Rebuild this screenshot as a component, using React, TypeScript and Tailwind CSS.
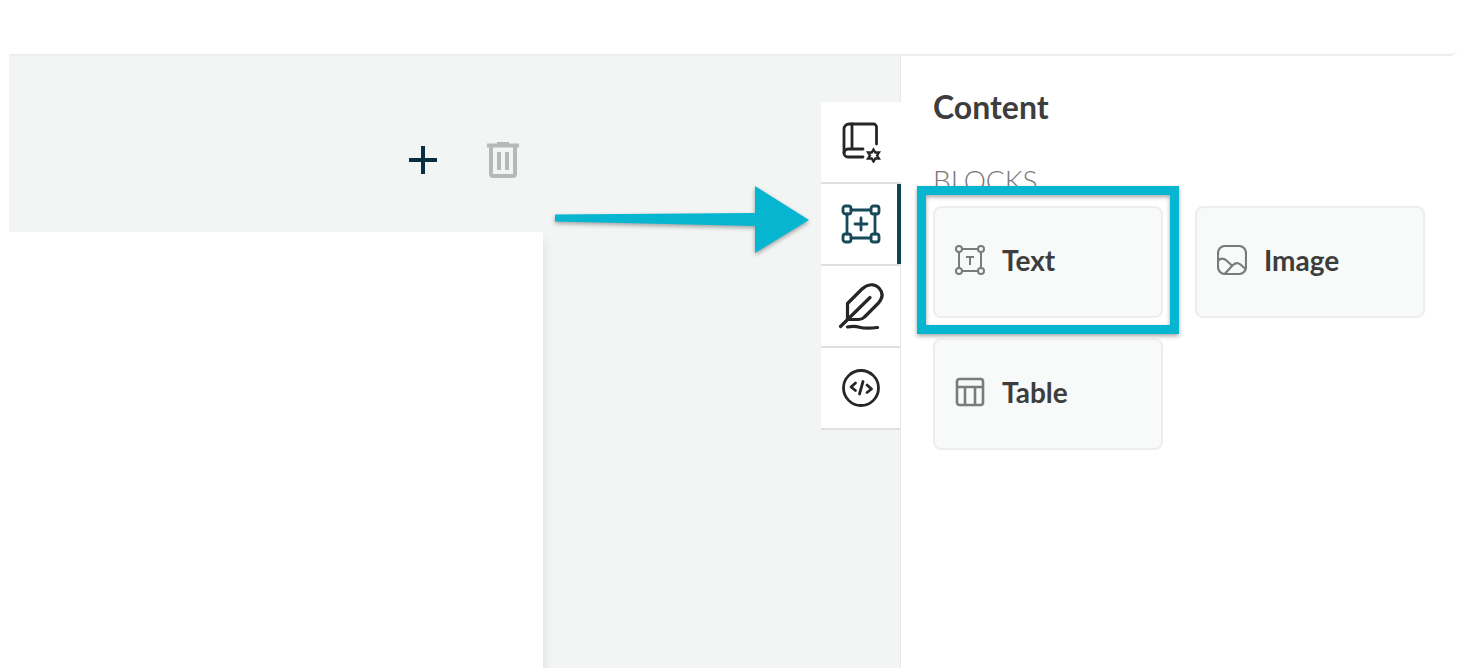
import { useState } from "react";
import type { ReactNode } from "react";

type Tab = "settings" | "content" | "design" | "code";
type Block = "text" | "image" | "table";

function SettingsIcon() {
  return (
    <svg width="40" height="42" viewBox="0 0 40 42" fill="none" stroke="#262626" strokeWidth="2.800" strokeLinecap="round" strokeLinejoin="round">
      <path d="M35.500 23V6a3 3 0 0 0-3-3H8a5 5 0 0 0-5 5v24a4 4 0 0 0 4 4h15" />
      <path d="M22 28H7a4 4 0 0 0-4 4M11 3v25" />
      <path d="M32.500 28.500l1.800 3h3.600l-1.800 3 1.800 3h-3.600l-1.800 3-1.800-3h-3.600l1.800-3-1.800-3h3.600z" strokeWidth="2.400" strokeLinejoin="miter" />
    </svg>
  );
}

function ContentIcon() {
  return (
    <svg width="40" height="40" viewBox="0 0 40 40" fill="none" stroke="#17495a" strokeWidth="2.800" strokeLinecap="round">
      <rect x="2" y="2" width="8" height="8" rx="2.500" />
      <rect x="30" y="2" width="8" height="8" rx="2.500" />
      <rect x="2" y="30" width="8" height="8" rx="2.500" />
      <rect x="30" y="30" width="8" height="8" rx="2.500" />
      <path d="M10 6h20M10 34h20M6 10v20M34 10v20M20 14v12M14 20h12" />
    </svg>
  );
}

function DesignIcon() {
  return (
    <svg width="46" height="48" viewBox="0 0 46 48" fill="none" stroke="#262626" strokeWidth="3.200" strokeLinecap="round" strokeLinejoin="round">
      <path d="M9.500 37.500V21.500L24 7C30 1.500 37 1.500 41 6s4 10-0.500 15L26.500 35a8 8 0 0 1-6 2.500z" />
      <path d="M2.500 44.500L32 15.500M9.500 45c5-1 8-1 12 0.200s9 1.300 18 0.300" />
    </svg>
  );
}

function CodeIcon() {
  return (
    <svg width="40" height="40" viewBox="0 0 40 40" fill="none" stroke="#262626" strokeWidth="2.800" strokeLinecap="round" strokeLinejoin="round">
      <circle cx="20" cy="20" r="17.500" />
      <path d="M14.500 15L10 19l4.500 3.500M22 13.500l-3.500 12.500M26 17l4.500 4-4.500 3.500" />
    </svg>
  );
}

function TextIcon() {
  return (
    <svg width="30" height="30" viewBox="0 0 30 30" fill="none" stroke="#7a7b7b" strokeWidth="2">
      <circle cx="4" cy="4" r="3" />
      <circle cx="26" cy="4" r="3" />
      <circle cx="4" cy="26" r="3" />
      <circle cx="26" cy="26" r="3" />
      <path d="M7 4h16M7 26h16M4 7v16M26 7v16M11 12h8M15 12v8" />
    </svg>
  );
}

function ImageIcon() {
  return (
    <svg width="30" height="30" viewBox="0 0 30 30" fill="none" stroke="#7a7b7b" strokeWidth="2.200" strokeLinejoin="round">
      <rect x="1" y="1" width="28" height="28" rx="7" />
      <path d="M1 15.500c3-2.500 6-2.500 9 0.500l5.500 5M8 28.500l8-8.500c2.500-2.500 5-2.500 7.500-0.500l5 4.500" />
    </svg>
  );
}

function TableIcon() {
  return (
    <svg width="30" height="30" viewBox="0 0 30 30" fill="none" stroke="#7a7b7b" strokeWidth="2.600">
      <rect x="2" y="2" width="26" height="26" rx="2.500" />
      <path d="M2 10h26M10 10v18M20 10v18" />
    </svg>
  );
}

const tabs: { id: Tab; label: string; icon: ReactNode }[] = [
  { id: "settings", label: "Settings", icon: <SettingsIcon /> },
  { id: "content", label: "Content", icon: <ContentIcon /> },
  { id: "design", label: "Design", icon: <DesignIcon /> },
  { id: "code", label: "Code", icon: <CodeIcon /> },
];

const blocks: { id: Block; label: string; icon: ReactNode }[] = [
  { id: "text", label: "Text", icon: <TextIcon /> },
  { id: "image", label: "Image", icon: <ImageIcon /> },
  { id: "table", label: "Table", icon: <TableIcon /> },
];

export default function App() {
  const [activeTab, setActiveTab] = useState<Tab>("content");
  const [highlighted, setHighlighted] = useState<Block>("text");

  return (
    <div className="flex min-h-screen flex-col bg-white px-[9px] font-['Lato','Open_Sans',sans-serif] text-[#3d3d3d]">
      <header className="h-14 rounded-br-lg border-b-2 border-[#eceeee]" />

      <div className="flex flex-1">
        {/* Canvas */}
        <main className="relative flex flex-1 overflow-hidden bg-[#f3f5f5]">
          <div className="flex w-[534px] flex-col">
            <div className="flex h-44 items-center justify-end gap-10 pt-8 pr-5">
              <button type="button" aria-label="Add" className="flex size-10 items-center justify-center">
                <svg width="28" height="28" viewBox="0 0 28 28" stroke="#08303f" strokeWidth="4">
                  <path d="M14 0v28M0 14h28" />
                </svg>
              </button>
              <button type="button" aria-label="Delete" className="flex size-10 items-center justify-center">
                <svg width="32" height="36" viewBox="0 0 32 36" fill="none" stroke="#b7b8b8" strokeWidth="4">
                  <path d="M0 3.500h32M10 1.500h12" />
                  <path d="M4 4v28a2 2 0 0 0 2 2h20a2 2 0 0 0 2-2V4M12 10v18M20 10v18" />
                </svg>
              </button>
            </div>
            <div className="flex-1 bg-white shadow-[2px_8px_8px_#dfe2e6]" />
          </div>

          {/* Pointer to the active tab */}
          <svg
            className="absolute top-32 right-2 drop-shadow-[0_2px_2px_rgba(0,0,0,0.35)]"
            width="258"
            height="72"
            viewBox="0 0 258 72"
            fill="#06b6d1"
          >
            <path d="M0 30.500L200 29V2l54 34-54 33V42L0 37.500z" />
          </svg>
        </main>

        <nav aria-label="Editor panels" className="flex w-[79px] flex-col bg-[#f3f5f5] pt-[46px]">
          {tabs.map((tab) => (
            <button
              key={tab.id}
              type="button"
              aria-label={tab.label}
              aria-pressed={activeTab === tab.id}
              onClick={() => setActiveTab(tab.id)}
              className={`flex h-[82px] border-b-2 border-[#dfe0e0] bg-white ${
                activeTab === tab.id || tab.id === "settings" ? "relative z-10 -mr-px" : ""
              }`}
            >
              <span
                className={`flex h-full w-full items-center justify-center ${
                  activeTab === tab.id ? "border-r-4 border-[#0d4555] pl-1" : ""
                }`}
              >
                {tab.icon}
              </span>
            </button>
          ))}
        </nav>

        {/* Content panel */}
        <aside className="w-[557px] border-l border-[#e6e8e8] pt-8 pr-8 pl-8">
          <h1 className="text-[32px] leading-[38px] font-bold">Content</h1>
          <h2 className="mt-9 text-[28px] leading-9 font-light text-[#777]">BLOCKS</h2>
          <div className="mt-2 grid grid-cols-2 gap-x-8 gap-y-5">
            {blocks.map((block) => (
              <div key={block.id} className="relative">
                <button
                  type="button"
                  onClick={() => setHighlighted(block.id)}
                  className="flex h-28 w-full items-center gap-[17px] rounded-lg border-2 border-[#eceeee] bg-[#f8f9f9] px-5 pb-1 text-[28px] font-bold"
                >
                  {block.icon}
                  {block.label}
                </button>
                {highlighted === block.id && (
                  <div className="pointer-events-none absolute -inset-x-4 -top-5 -bottom-4 border-9 border-[#06b6d1] drop-shadow-[0_2px_2px_rgba(0,0,0,0.35)]" />
                )}
              </div>
            ))}
          </div>
        </aside>
      </div>
    </div>
  );
}
